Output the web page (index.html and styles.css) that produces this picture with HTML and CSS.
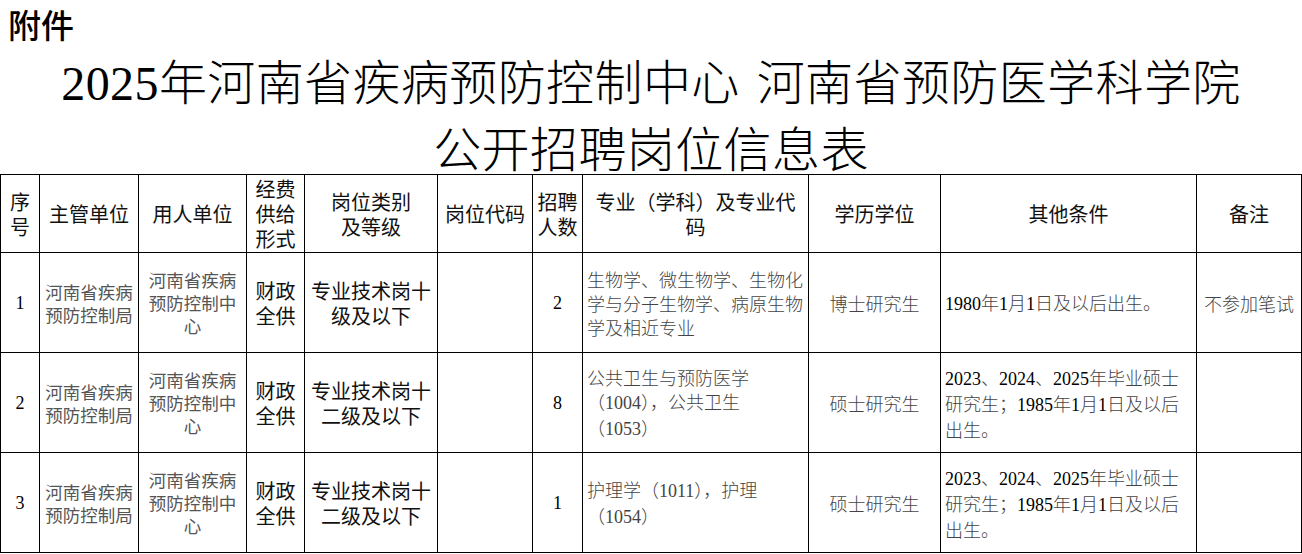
FILE: index.html
```html
<!DOCTYPE html>
<html lang="zh-CN">
<head>
<meta charset="utf-8">
<title>公开招聘岗位信息表</title>
<link rel="stylesheet" href="styles.css">
</head>
<body>
<div class="annex">附件</div>
<h1 class="title"><span class="num">2025</span>年河南省疾病预防控制中心 河南省预防医学科学院<br>公开招聘岗位信息表</h1>
<table class="jobs">
  <colgroup>
    <col class="c1"><col class="c2"><col class="c3"><col class="c4"><col class="c5"><col class="c6"><col class="c7"><col class="c8"><col class="c9"><col class="c10"><col class="c11">
  </colgroup>
  <thead>
    <tr class="head">
      <th>序号</th>
      <th>主管单位</th>
      <th>用人单位</th>
      <th>经费供给形式</th>
      <th>岗位类别<br>及等级</th>
      <th>岗位代码</th>
      <th>招聘人数</th>
      <th>专业（学科）及专业代码</th>
      <th>学历学位</th>
      <th>其他条件</th>
      <th>备注</th>
    </tr>
  </thead>
  <tbody>
    <tr>
      <td class="num">1</td>
      <td class="unit">河南省疾病预防控制局</td>
      <td class="unit">河南省疾病预防控制中心</td>
      <td class="bold">财政全供</td>
      <td class="bold">专业技术岗十级及以下</td>
      <td></td>
      <td class="num">2</td>
      <td class="left song">生物学、微生物学、生物化学与分子生物学、病原生物学及相近专业</td>
      <td class="song">博士研究生</td>
      <td class="left song"><span class="dig">1980</span>年<span class="dig">1</span>月<span class="dig">1</span>日及以后出生。</td>
      <td class="song">不参加笔试</td>
    </tr>
    <tr>
      <td class="num">2</td>
      <td class="unit">河南省疾病预防控制局</td>
      <td class="unit">河南省疾病预防控制中心</td>
      <td class="bold">财政全供</td>
      <td class="bold">专业技术岗十二级及以下</td>
      <td></td>
      <td class="num">8</td>
      <td class="left song">公共卫生与预防医学（<span class="dg">1004</span>），公共卫生（<span class="dg">1053</span>）</td>
      <td class="song">硕士研究生</td>
      <td class="left song"><span class="dig">2023</span>、<span class="dig">2024</span>、<span class="dig">2025</span>年毕业硕士研究生；<span class="dig">1985</span>年<span class="dig">1</span>月<span class="dig">1</span>日及以后出生。</td>
      <td></td>
    </tr>
    <tr>
      <td class="num">3</td>
      <td class="unit">河南省疾病预防控制局</td>
      <td class="unit">河南省疾病预防控制中心</td>
      <td class="bold">财政全供</td>
      <td class="bold">专业技术岗十二级及以下</td>
      <td></td>
      <td class="num">1</td>
      <td class="left song">护理学（<span class="dg">1011</span>），护理（<span class="dg">1054</span>）</td>
      <td class="song">硕士研究生</td>
      <td class="left song"><span class="dig">2023</span>、<span class="dig">2024</span>、<span class="dig">2025</span>年毕业硕士研究生；<span class="dig">1985</span>年<span class="dig">1</span>月<span class="dig">1</span>日及以后出生。</td>
      <td></td>
    </tr>
  </tbody>
</table>
</body>
</html>
```
FILE: styles.css
```css
html, body {
  margin: 0;
  padding: 0;
  background: #fff;
}
body {
  font-family: "Noto Sans CJK SC", sans-serif;
  color: #000;
  width: 1302px;
}
.annex {
  font-size: 33px;
  font-weight: 500;
  padding-left: 8px;
  height: 48px;
  line-height: 48px;
}
.title {
  margin: 0 0 2px 0;
  font-size: 48px;
  font-weight: 300;
  line-height: 62px;
  letter-spacing: 0.4px;
  word-spacing: 6px;
  text-align: center;
  height: 124px;
}
.title .num {
  font-family: "Liberation Serif", serif;
  font-weight: 400;
}
.jobs {
  border-collapse: collapse;
  table-layout: fixed;
  width: 1301px;
}
.c1 { width: 39px; }
.c2 { width: 99px; }
.c3 { width: 108px; }
.c4 { width: 58px; }
.c5 { width: 133px; }
.c6 { width: 95px; }
.c7 { width: 50px; }
.c8 { width: 226px; }
.c9 { width: 132px; }
.c10 { width: 256px; }
.c11 { width: 105px; }
.jobs th, .jobs td {
  border: 1.5px solid #000;
  padding: 0 4px;
  text-align: center;
  vertical-align: middle;
}
.jobs th {
  font-size: 20px;
  font-weight: 400;
  line-height: 25px;
  color: #111;
}
.head {
  height: 78px;
}
.jobs tbody tr {
  height: 100px;
}
.jobs td {
  font-size: 18px;
  line-height: 24px;
  color: #555;
}
.jobs td.num {
  font-family: "Liberation Serif", serif;
  color: #000;
}
.jobs td.unit {
  font-size: 17.5px;
  line-height: 23px;
  color: #555;
}
.jobs td.bold {
  font-size: 20px;
  font-weight: 400;
  line-height: 25px;
  color: #111;
}
.jobs td.song {
  font-weight: 300;
  color: #444;
}
.jobs td.left {
  text-align: left;
}
.dig {
  font-family: "Liberation Serif", serif;
  color: #000;
  font-weight: 400;
}
.dg {
  font-family: "Liberation Serif", serif;
  font-weight: 400;
}
```
